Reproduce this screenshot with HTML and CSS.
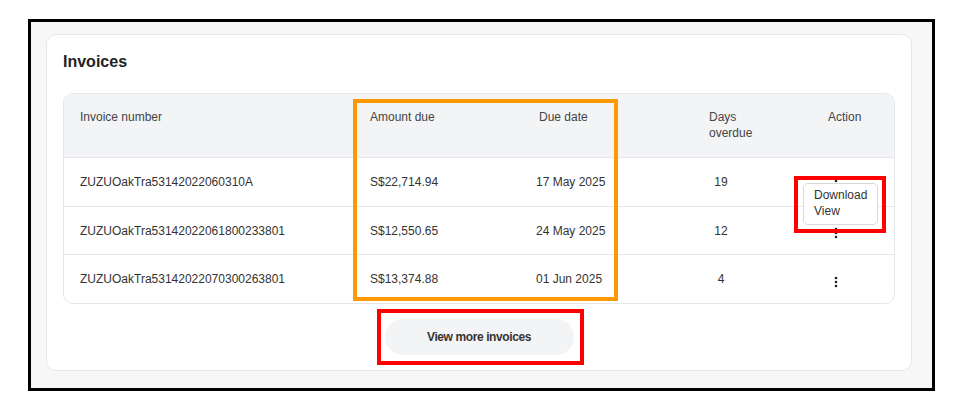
FILE: index.html
```html
<!DOCTYPE html>
<html>
<head>
    <title>Invoices</title>
    <link rel="stylesheet" href="styles.css">
</head>
<body>
    <div class="frame">
        <div class="card">
            <h2 class="card-title">Invoices</h2>

            <div class="table-wrap">
                <table class="invoice-table">
                    <colgroup>
                        <col class="col-number">
                        <col class="col-amount">
                        <col class="col-date">
                        <col class="col-days">
                        <col class="col-action">
                    </colgroup>
                    <thead>
                        <tr>
                            <th>Invoice number</th>
                            <th>Amount due</th>
                            <th>Due date</th>
                            <th><span class="wrap-head">Days overdue</span></th>
                            <th>Action</th>
                        </tr>
                    </thead>
                    <tbody>
                        <tr>
                            <td>ZUZUOakTra53142022060310A</td>
                            <td>S$22,714.94</td>
                            <td class="date">17 May 2025</td>
                            <td><span class="days">19</span></td>
                            <td class="action">
                                <svg class="kebab" viewBox="0 0 4 12"><circle cx="2" cy="2" r="1.3"/><circle cx="2" cy="6" r="1.3"/><circle cx="2" cy="10" r="1.3"/></svg>
                            </td>
                        </tr>
                        <tr>
                            <td>ZUZUOakTra53142022061800233801</td>
                            <td>S$12,550.65</td>
                            <td class="date">24 May 2025</td>
                            <td><span class="days">12</span></td>
                            <td class="action">
                                <svg class="kebab" viewBox="0 0 4 12"><circle cx="2" cy="2" r="1.3"/><circle cx="2" cy="6" r="1.3"/><circle cx="2" cy="10" r="1.3"/></svg>
                            </td>
                        </tr>
                        <tr>
                            <td>ZUZUOakTra53142022070300263801</td>
                            <td>S$13,374.88</td>
                            <td class="date">01 Jun 2025</td>
                            <td><span class="days">4</span></td>
                            <td class="action">
                                <svg class="kebab" viewBox="0 0 4 12"><circle cx="2" cy="2" r="1.3"/><circle cx="2" cy="6" r="1.3"/><circle cx="2" cy="10" r="1.3"/></svg>
                            </td>
                        </tr>
                    </tbody>
                </table>

                <!-- open action menu for first row -->
                <div class="action-menu">
                    <div>Download</div>
                    <div>View</div>
                </div>

                <!-- annotation boxes -->
                <div class="mark mark-columns"></div>
                <div class="mark mark-menu"></div>
            </div>

            <div class="more-row">
                <div class="more-wrap">
                    <button class="more-btn" type="button">View more invoices</button>
                    <div class="mark mark-button"></div>
                </div>
            </div>
        </div>
    </div>
</body>
</html>
```

FILE: styles.css
```css
body {
    margin: 0;
    background: #fff;
    font-family: "Liberation Sans", Arial, sans-serif;
    color: #333;
}

.frame {
    width: 886px;
    height: 354px;
    margin: 19px 0 0 28px;
    padding: 12px 0 0 15px;
    border: 3px solid #000;
    background-color: #f7f7f7;
}

.card {
    width: 866px;
    box-sizing: border-box;
    padding: 17px 16px 15px 16px;
    background-color: #fff;
    border: 1px solid #e6e7ea;
    border-radius: 10px;
}

.card-title {
    margin: 0;
    font-size: 16px;
    line-height: 20px;
    font-weight: bold;
    color: #222;
}

.table-wrap {
    position: relative;
    margin-top: 21px;
    border: 1px solid #e5e7eb;
    border-radius: 10px;
    overflow: hidden;
}

.invoice-table {
    width: 100%;
    border-collapse: separate;
    border-spacing: 0;
    table-layout: fixed;
    font-size: 12px;
    line-height: 16px;
}

.col-number { width: 290px; }
.col-amount { width: 169px; }
.col-date { width: 170px; }
.col-days { width: 119px; }

th {
    background-color: #f3f4f6;
    color: #444;
    font-weight: normal;
    text-align: left;
    vertical-align: top;
    padding: 15px 16px 16px 16px;
    border-bottom: 1px solid #e5e7eb;
}

.wrap-head {
    display: block;
    width: 50px;
}

td {
    height: 47px;
    padding: 0 16px;
    vertical-align: middle;
    color: #333;
    white-space: nowrap;
}

tbody tr:first-child td,
tbody tr:last-child td {
    height: 48px;
}

tbody tr + tr td {
    border-top: 1px solid #e5e7eb;
}

td.date {
    padding-left: 13px;
}

.days {
    display: inline-block;
    width: 24px;
    text-align: center;
}

td.action {
    padding-left: 22px;
}

.kebab {
    display: block;
    width: 4px;
    height: 12px;
    margin-top: 5px;
    fill: #222;
}

.action-menu {
    position: absolute;
    left: 739px;
    top: 89px;
    width: 75px;
    height: 42px;
    box-sizing: border-box;
    padding: 3px 10px;
    background: #fff;
    border: 1px solid #d9d9d9;
    border-radius: 5px;
    font-size: 12px;
    line-height: 16px;
    color: #333;
}

.mark {
    position: absolute;
    box-sizing: border-box;
    border: 4px solid;
    pointer-events: none;
}

.mark-columns {
    left: 289px;
    top: 5px;
    width: 265px;
    height: 202px;
    border-color: #ff9900;
}

.mark-menu {
    left: 730px;
    top: 82px;
    width: 92px;
    height: 57px;
    border-color: #ff0000;
}

.more-row {
    display: flex;
    justify-content: center;
    margin-top: 15px;
}

.more-wrap {
    position: relative;
}

.more-btn {
    display: block;
    width: 189px;
    height: 36px;
    border: none;
    border-radius: 18px;
    background-color: #f3f4f6;
    font-family: "Liberation Sans", Arial, sans-serif;
    font-size: 12px;
    font-weight: bold;
    letter-spacing: -0.4px;
    color: #333;
    cursor: pointer;
}

.mark-button {
    top: -10px;
    right: -10px;
    bottom: -10px;
    left: -8px;
    border-color: #ff0000;
}
```
